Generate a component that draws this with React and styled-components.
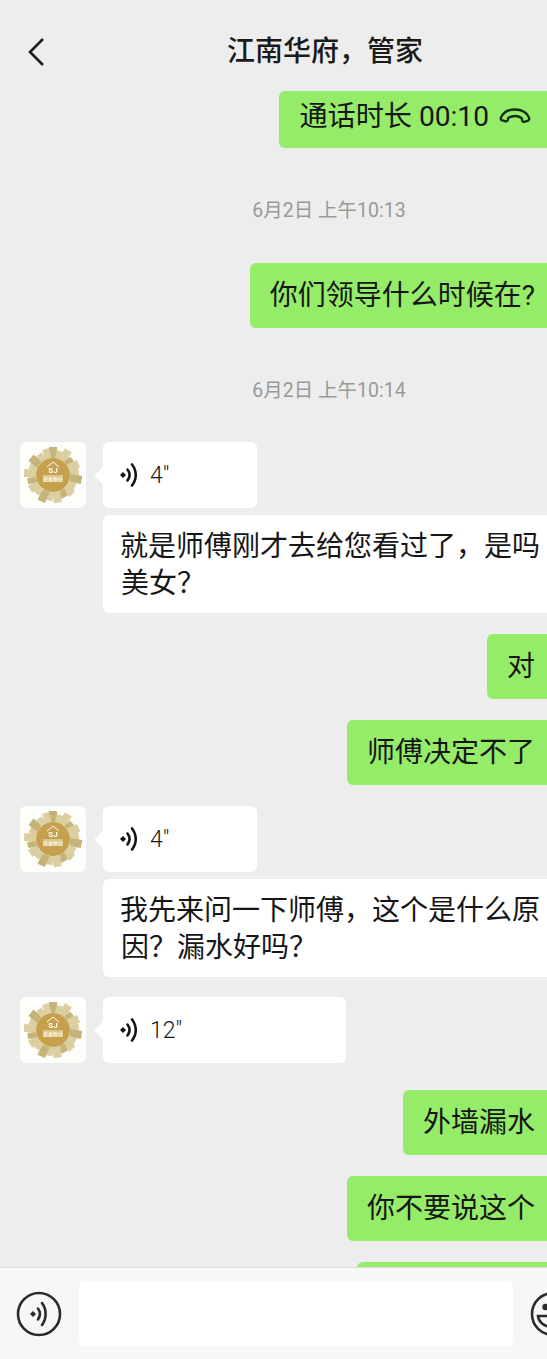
import React from 'react';
import styled, { createGlobalStyle } from 'styled-components';

const GlobalStyle = createGlobalStyle`
  html, body {
    margin: 0;
    padding: 0;
    background: #ededed;
  }
  * {
    box-sizing: border-box;
  }
`;

const Screen = styled.div`
  width: 547px;
  height: 1359px;
  display: flex;
  flex-direction: column;
  overflow: hidden;
  background: #ededed;
  color: #161616;
  font-family: Roboto, "Noto Sans CJK SC", sans-serif;
`;

const Header = styled.header`
  flex: 0 0 91px;
  position: relative;
  padding: 13px 0 0 103px;
  display: flex;
  align-items: center;
  justify-content: center;
`;

const BackButton = styled.svg`
  position: absolute;
  left: 24px;
  top: 36px;
`;

const Title = styled.h1`
  margin: 0;
  font-size: 28px;
  line-height: 38px;
  font-weight: 500;
  color: #1a1a1a;
`;

const Chat = styled.main`
  flex: 1;
  min-height: 0;
  overflow: hidden;
  display: flex;
  flex-direction: column;
`;

const TimeLabel = styled.div`
  margin-top: ${(p) => p.$top}px;
  padding-left: 111px;
  height: 24px;
  line-height: 26px;
  text-align: center;
  font-size: 19.5px;
  color: #999;
`;

const RightRow = styled.div`
  flex: none;
  margin-top: ${(p) => p.$top}px;
  margin-right: -8px;
  display: flex;
  justify-content: flex-end;
`;

const LeftRow = styled.div`
  flex: none;
  margin-top: ${(p) => p.$top}px;
  padding-left: 20px;
  display: flex;
  gap: 17px;
`;

const Avatar = styled.svg`
  flex: none;
  width: 66px;
  height: 66px;
  border-radius: 6px;
  background: #fdfdfa;
`;

const SentBubble = styled.div`
  width: ${(p) => (p.$width ? `${p.$width}px` : 'auto')};
  height: 65px;
  padding: 1px 20px 0;
  display: flex;
  align-items: center;
  border-radius: 6px;
  background: #95ec69;
  font-size: 28px;
  line-height: 48px;
  white-space: nowrap;
`;

const CallBubble = styled(SentBubble)`
  height: 57px;
  padding: 2px 24px 0 20px;
  align-items: flex-start;
  gap: 10px;
  font-size: 28.150px;
`;

const CallIcon = styled.svg`
  margin-top: 14px;
`;

const VoiceBubble = styled.div`
  position: relative;
  width: ${(p) => p.$width}px;
  height: 66px;
  padding-left: 16px;
  display: flex;
  align-items: center;
  gap: 11px;
  border-radius: 6px;
  background: #fff;
  font-size: 23px;
  font-weight: 300;

  &::before {
    content: '';
    position: absolute;
    left: -6px;
    top: 27px;
    width: 13px;
    height: 13px;
    background: #fff;
    transform: rotate(45deg);
  }
`;

const TextRow = styled.div`
  flex: none;
  margin-top: ${(p) => p.$top}px;
  padding-left: 103px;
`;

const TextBubble = styled.div`
  width: 456px;
  padding: 13px 17px 11px 18px;
  border-radius: 6px;
  background: #fff;
  font-size: 28px;
  line-height: 37px;
  text-indent: -1px;
`;

const InputBar = styled.footer`
  flex: 0 0 92px;
  padding-left: 16px;
  display: flex;
  align-items: center;
  gap: 17px;
  overflow: hidden;
  background: #f7f7f7;
  border-top: 1px solid #dedede;
`;

const RoundIcon = styled.svg`
  flex: none;
  width: 46px;
  height: 46px;
`;

const InputBox = styled.div`
  flex: none;
  width: 434px;
  height: 65px;
  border-radius: 6px;
  background: #fff;
`;

// ring of little buildings round the logo: angle, width, height
const buildings = [
  [0, 8, 11], [16, 6, 8], [32, 8, 12], [50, 6, 8], [66, 8, 11], [84, 7, 9],
  [100, 8, 12], [118, 6, 8], [134, 8, 10], [152, 7, 8], [170, 8, 11], [188, 6, 9],
  [204, 8, 12], [222, 6, 8], [238, 8, 10], [256, 6, 9], [274, 8, 12], [292, 6, 8],
  [308, 8, 11], [326, 6, 8], [344, 7, 10],
];

function CompanyAvatar() {
  return (
    <Avatar viewBox="0 0 66 66">
      <g style={{ filter: 'blur(0.6px)' }}>
        {buildings.map(([deg, w, h], i) => (
          <rect
            key={deg}
            x={33 - w / 2}
            y={16 - h}
            width={w}
            height={h}
            fill={i % 3 ? '#dbcfa2' : '#c4b47a'}
            transform={`rotate(${deg} 33 33)`}
          />
        ))}
        <circle cx="33" cy="33" r="17" fill="#c6a04c" />
        <path d="M27 25l6-5 6 5" fill="none" stroke="#fff" strokeWidth="1" />
        <text x="33" y="31" textAnchor="middle" fontSize="8" fontWeight="700" fill="#fff" fontFamily="Roboto, sans-serif">SJ</text>
        <rect x="23" y="33" width="20" height="7" fill="#dcc588" />
        <text x="33" y="39" textAnchor="middle" fontSize="5" fill="#fff" fontFamily="Noto Sans CJK SC, sans-serif">盛嘉物业</text>
      </g>
    </Avatar>
  );
}

function VoiceIcon() {
  return (
    <svg width="20" height="26" viewBox="0 0 20 26" fill="none" stroke="#141414" strokeWidth="2.6" strokeLinecap="round">
      <path d="M1 13l3-3 3 3-3 3z" fill="#141414" stroke="none" />
      <path d="M8.500 7.500c2.600 3.400 2.600 7.600 0 11" />
      <path d="M13 2.500c5 6.400 5 14.600 0 21" />
    </svg>
  );
}

export default function App() {
  return (
    <Screen>
      <GlobalStyle />
      <Header>
        <BackButton width="24" height="32" viewBox="0 0 24 32" fill="none" stroke="#1c1c1c" strokeWidth="2.6">
          <path d="M19 3L6 16l13 13" />
        </BackButton>
        <Title>江南华府，管家</Title>
      </Header>
      <Chat>
        <RightRow $top={0}>
          <CallBubble>
            通话时长 00:10
            <CallIcon width="32" height="18" viewBox="0 0 32 18" fill="none" stroke="#123010" strokeWidth="2.4" strokeLinejoin="round">
              <path d="M2 10.500C5 4 11 2.500 16 2.500S27 4 30 10.500c.6 1.500-.2 3-1.400 3.400l-3.200.9c-1 .2-1.800-.2-2.100-1.200l-.6-2.400C20.500 9.600 18 9 16 9s-4.500.6-6.700 1.700l-.6 2.400c-.3 1-1.100 1.400-2.100 1.200l-3.200-.9C2.200 13.500 1.400 12 2 10.500z" />
            </CallIcon>
          </CallBubble>
        </RightRow>
        <TimeLabel $top={50}>6月2日 上午10:13</TimeLabel>
        <RightRow $top={41}>
          <SentBubble>你们领导什么时候在?</SentBubble>
        </RightRow>
        <TimeLabel $top={50}>6月2日 上午10:14</TimeLabel>
        <LeftRow $top={40}>
          <CompanyAvatar />
          <VoiceBubble $width={154}>
            <VoiceIcon />
            4"
          </VoiceBubble>
        </LeftRow>
        <TextRow $top={7}>
          <TextBubble>就是师傅刚才去给您看过了，是吗美女？</TextBubble>
        </TextRow>
        <RightRow $top={21}>
          <SentBubble>对</SentBubble>
        </RightRow>
        <RightRow $top={21}>
          <SentBubble>师傅决定不了</SentBubble>
        </RightRow>
        <LeftRow $top={21}>
          <CompanyAvatar />
          <VoiceBubble $width={154}>
            <VoiceIcon />
            4"
          </VoiceBubble>
        </LeftRow>
        <TextRow $top={7}>
          <TextBubble>我先来问一下师傅，这个是什么原因？漏水好吗？</TextBubble>
        </TextRow>
        <LeftRow $top={20}>
          <CompanyAvatar />
          <VoiceBubble $width={243}>
            <VoiceIcon />
            12"
          </VoiceBubble>
        </LeftRow>
        <RightRow $top={27}>
          <SentBubble>外墙漏水</SentBubble>
        </RightRow>
        <RightRow $top={21}>
          <SentBubble>你不要说这个</SentBubble>
        </RightRow>
        <RightRow $top={21}>
          <SentBubble $width={198} />
        </RightRow>
      </Chat>
      <InputBar>
        <RoundIcon viewBox="0 0 46 46" fill="none" stroke="#2a2a2a" strokeWidth="2.6" strokeLinecap="round">
          <circle cx="23" cy="23" r="21" />
          <path d="M14 23l3-3 3 3-3 3z" fill="#2a2a2a" stroke="none" />
          <path d="M22 17.500c2.400 3.400 2.400 7.600 0 11" />
          <path d="M26 12c4.800 6.400 4.800 15.600 0 22" />
        </RoundIcon>
        <InputBox />
        <RoundIcon viewBox="0 0 46 46" fill="none" stroke="#2a2a2a" strokeWidth="2.6" strokeLinecap="round">
          <circle cx="23" cy="23" r="21" />
          <circle cx="15.500" cy="16" r="3.200" fill="#2a2a2a" stroke="none" />
          <path d="M8 25h30c-1 7-7 11-15 11S9 32 8 25z" />
        </RoundIcon>
      </InputBar>
    </Screen>
  );
}
